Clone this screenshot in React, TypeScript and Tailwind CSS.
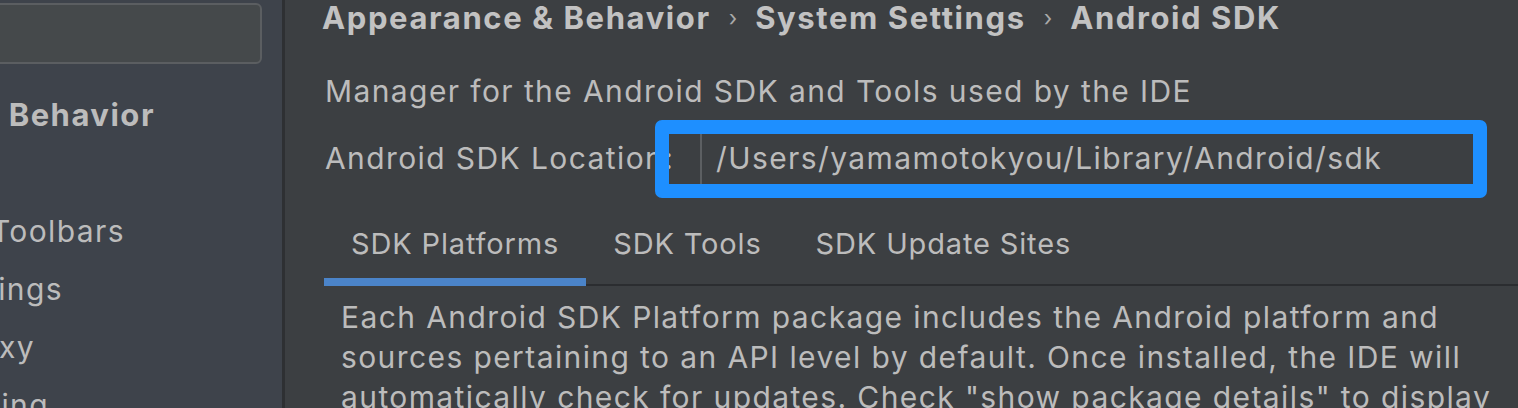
import { ReactNode } from "react";

const font = "font-['Inter','Noto_Sans',sans-serif]";
const bodyText = "text-[30px] tracking-[1.4px] text-[#bcbcbc]";

function TreeRow({ label, bold, width }: { label: string; bold?: boolean; width: string }) {
  return (
    <div className={`h-[58px] flex items-center justify-end shrink-0 ${width}`}>
      <span
        className={`whitespace-nowrap text-[#bcbcbc] ${
          bold ? "font-bold text-[31px] tracking-[1.5px]" : "text-[30px] tracking-[1.4px]"
        }`}
      >
        {label}
      </span>
    </div>
  );
}

function Tab({ children, active }: { children: ReactNode; active?: boolean }) {
  return (
    <div
      className={`h-[84px] mb-[-2px] px-[27px] flex items-center text-[29px] tracking-[0.85px] text-[#bcbcbc] whitespace-nowrap ${
        active ? "shadow-[inset_0_-8px_0_#4b84c9]" : ""
      }`}
    >
      {children}
    </div>
  );
}

function Sidebar() {
  return (
    <div className="w-[282px] shrink-0 bg-[#3e434b] overflow-hidden flex flex-col">
      <div className="mt-[3px] ml-[-10px] w-[272px] h-[61px] shrink-0 rounded-md border-2 border-[#5b5e61] bg-[#45494b]" />
      <div className="mt-[22px] flex flex-col shrink-0">
        <TreeRow label="Appearance & Behavior" bold width="w-[155px]" />
        <div className="h-[58px] shrink-0" />
        <TreeRow label="Menus and Toolbars" width="w-[125px]" />
        <TreeRow label="System Settings" width="w-[63px]" />
        <TreeRow label="HTTP Proxy" width="w-[35px]" />
        <TreeRow label="Data Sharing" width="w-[49px]" />
      </div>
    </div>
  );
}

function Crumb({ children }: { children: ReactNode }) {
  return <span className="font-bold text-[31px] tracking-[1.6px] text-[#c2c2c2]">{children}</span>;
}

function Chevron() {
  return <span className="mx-[18px] text-[22px] text-[#a9a9a9]">›</span>;
}

function App() {
  return (
    <div className={`w-[1518px] h-[408px] flex overflow-hidden ${font}`}>
      <Sidebar />
      <div className="w-[3px] shrink-0 bg-[#2e3033]" />
      <div className="flex-1 bg-[#3c3f42] pl-[39px] flex flex-col overflow-hidden">
        <div className="h-[36px] shrink-0 ml-[-2px] flex items-center whitespace-nowrap">
          <Crumb>Appearance &amp; Behavior</Crumb>
          <Chevron />
          <Crumb>System Settings</Crumb>
          <Chevron />
          <Crumb>Android SDK</Crumb>
        </div>

        <div className={`mt-[36px] h-[38px] shrink-0 pl-[1px] flex items-center whitespace-nowrap ${bodyText}`}>
          Manager for the Android SDK and Tools used by the IDE
        </div>

        <div className="mt-[10px] h-[77px] shrink-0 flex items-center">
          <div className={`w-[345px] shrink-0 pl-[1px] whitespace-nowrap ${bodyText}`}>Android SDK Location:</div>
          <div className="relative w-[804px] h-[50px] flex items-stretch">
            <div className="w-[33px] border-r-2 border-[#5c5f62]" />
            <div className={`pl-[14px] flex items-center whitespace-nowrap ${bodyText}`}>
              /Users/yamamotokyou/Library/Android/sdk
            </div>
            {/* highlight drawn over the field */}
            <div className="absolute inset-[-14px] rounded-[7px] border-[14px] border-[#1e8fff]" />
          </div>
        </div>

        <div className="mt-[5px] h-[84px] shrink-0 flex border-b-2 border-[#2b2d30]">
          <Tab active>SDK Platforms</Tab>
          <Tab>SDK Tools</Tab>
          <Tab>SDK Update Sites</Tab>
        </div>

        <div className={`mt-[11px] shrink-0 pl-[17px] leading-[40px] whitespace-nowrap ${bodyText}`}>
          Each Android SDK Platform package includes the Android platform and
          <br />
          sources pertaining to an API level by default. Once installed, the IDE will
          <br />
          automatically check for updates. Check "show package details" to display
        </div>
      </div>
    </div>
  );
}

export default App;
